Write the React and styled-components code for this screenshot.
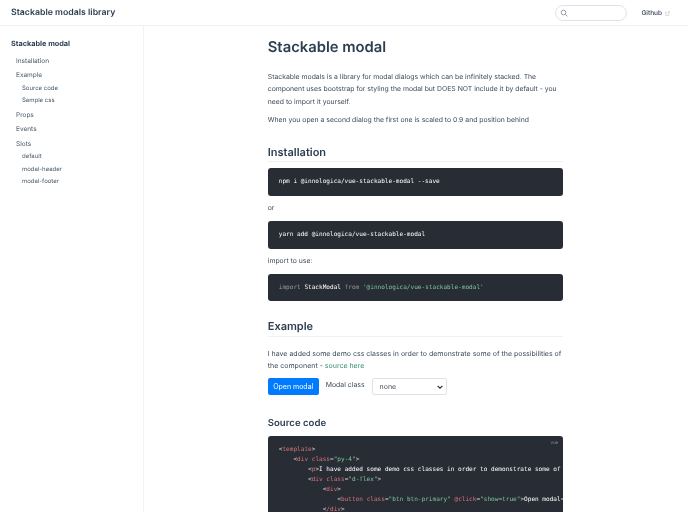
import React from "react";
import styled, { createGlobalStyle } from "styled-components";

const Global = createGlobalStyle`
  html, body { margin: 0; padding: 0; background: #fff; overflow: hidden; height: 512px; }
  body { font-family: Inter, "Noto Sans", sans-serif; color: #2c3e50; text-rendering: geometricPrecision; }
`;
const Page = styled.div`width: 688px; height: 512px; overflow: hidden; display: flex; flex-direction: column; background: #fff; filter: blur(0.4px);`;
const Header = styled.header`
  height: 25px; flex: none; border-bottom: 1px solid #eff1f3; display: flex; align-items: center;
  padding: 0 18px 0 11px;
`;
const Brand = styled.div`font-size: 8.75px; font-weight: 600; color: #2c3e50; flex: 1; padding-top: 1px;`;
const Search = styled.div`
  box-sizing: border-box; width: 72px; height: 16px; border: 1px solid #dfe3e7; border-radius: 8px; display: flex; align-items: center; padding-left: 4px;
  margin-right: 14px; color: #7d8791;
`;
const Github = styled.a`font-size: 6.5px; font-weight: 500; color: #2c3e50; display: flex; align-items: center; gap: 3px; padding-top: 1px;`;
const Body = styled.div`flex: 1; display: flex; min-height: 0;`;
const Sidebar = styled.aside`width: 144px; flex: none; border-right: 1px solid #f2f3f5; box-sizing: border-box; padding-top: 12px;`;
const SideTitle = styled.div`font-size: 7.3px; font-weight: 700; padding-left: 11px; line-height: 12px; margin-bottom: 3.8px;`;
const SideLink = styled.div`
  color: #4a5a6a;
  padding-left: ${p => (p.$sub ? 22 : 16)}px;
  font-size: ${p => (p.$sub ? 6 : 6.5)}px;
  line-height: ${p => (p.$sub ? 12.6 : 14.4)}px;
`;
const Main = styled.main`flex: 1; min-width: 0; display: flex; justify-content: center;`;
const Content = styled.div`width: 295.5px; padding-top: 11px; margin-left: -1px;`;
const H1 = styled.h1`font-size: 14.8px; line-height: 20px; font-weight: 600; margin: 0 0 14.2px;`;
const P = styled.p`
  font-size: ${p => (p.$large ? 7 : 6.85)}px; line-height: ${p => (p.$large ? 12 : 12.3)}px; margin: 0 0 6.4px; color: #3c4b5a;
`;
const H2 = styled.h2`
  font-size: 11px; line-height: 15px; font-weight: 600; margin: 18px 0 6px; padding-bottom: 1.5px; border-bottom: 1px solid #eff1f3;
  & + p { margin-top: 11px; }
`;
const H3 = styled.h3`font-size: 9.6px; line-height: 13px; font-weight: 600; margin: 21.5px 0 6px;`;
const Code = styled.pre`
  position: relative; margin: 0 0 6.5px; background: #282c34; border-radius: 3px; padding: 0 11px; height: 27.6px;
  line-height: 27.6px; font-family: "DejaVu Sans Mono", monospace; font-size: 6.08px; color: #fff; overflow: hidden;
`;
const Block = styled(Code)`height: 100px; line-height: 10px; padding-top: 9.6px; padding-right: 0; white-space: pre;`;
const Lang = styled.span`position: absolute; top: 3px; right: 5px; font-size: 4.5px; color: rgba(255,255,255,.4); font-family: Inter, sans-serif;`;
const K = styled.span`color: #999;`;
const S = styled.span`color: #7ec699;`;
const Tag = styled.span`color: #d8727a;`;
const Punct = styled.span`color: #ccc;`;
const A = styled.a`color: #2f8f68;`;
const Controls = styled.div`display: flex; align-items: center; gap: 7px;`;
const Btn = styled.button`
  width: 51px; height: 17px; background: #007bff; color: #fff; border: 0; border-radius: 2px; padding: 0;
  font: 7px Inter, sans-serif;
`;
const Label = styled.span`font-size: 6.9px; margin-top: -4px; color: #3c4b5a;`;
const Sel = styled.div`
  width: 75.5px; height: 17px; box-sizing: border-box; border: 1px solid #dfe3e7; border-radius: 2px; font-size: 7px; padding: 0 3px 0 7px;
  display: flex; align-items: center; justify-content: space-between; color: #495057;
`;

const Icon = () => (
  <svg width="8" height="8" viewBox="0 0 24 24" fill="none" stroke="currentColor" strokeWidth="2.4">
    <circle cx="10.5" cy="10.5" r="7" /><path d="M16 16l6 6" />
  </svg>
);
const Ext = () => (
  <svg width="5" height="5" viewBox="0 0 24 24" fill="none" stroke="#aaa" strokeWidth="2">
    <path d="M18 14v7H3V6h7M14 3h7v7M21 3L10 14" />
  </svg>
);
const T = ({ children }) => <><Punct>&lt;</Punct><Tag>{children}</Tag></>;
const E = () => <Punct>&gt;</Punct>;

export default function App() {
  return (
    <Page>
      <Global />
      <Header>
        <Brand>Stackable modals library</Brand>
        <Search><Icon /></Search>
        <Github>Github <Ext /></Github>
      </Header>
      <Body>
        <Sidebar>
          <SideTitle>Stackable modal</SideTitle>
          <SideLink>Installation</SideLink>
          <SideLink>Example</SideLink>
          <SideLink $sub>Source code</SideLink>
          <SideLink $sub>Sample css</SideLink>
          <SideLink>Props</SideLink>
          <SideLink>Events</SideLink>
          <SideLink>Slots</SideLink>
          <SideLink $sub>default</SideLink>
          <SideLink $sub>modal-header</SideLink>
          <SideLink $sub>modal-footer</SideLink>
        </Sidebar>
        <Main>
          <Content>
            <H1>Stackable modal</H1>
            <P>Stackable modals is a library for modal dialogs which can be infinitely stacked. The component uses bootstrap for styling the modal but DOES NOT include it by default - you need to import it yourself.</P>
            <P>When you open a second dialog the first one is scaled to 0.9 and position behind</P>
            <H2>Installation</H2>
            <Code>npm i @innologica/vue-stackable-modal --save</Code>
            <P>or</P>
            <Code>yarn add @innologica/vue-stackable-modal</Code>
            <P>import to use:</P>
            <Code><K>import</K> StackModal <K>from</K> <S>'@innologica/vue-stackable-modal'</S></Code>
            <H2>Example</H2>
            <P $large>I have added some demo css classes in order to demonstrate some of the possibilities of the component - <A>source here</A></P>
            <Controls>
              <Btn>Open modal</Btn>
              <Label>Modal class</Label>
              <Sel>none <svg width="6" height="4" viewBox="0 0 10 6" fill="none" stroke="#333" strokeWidth="2"><path d="M1 1l4 4 4-4" /></svg></Sel>
            </Controls>
            <H3>Source code</H3>
            <Block>
              <Lang>vue</Lang>
              <T>template</T><E />{"\n"}
              {"    "}<T>div</T> <Tag>class</Tag><Punct>=</Punct><S>"py-4"</S><E />{"\n"}
              {"        "}<T>p</T><E />I have added some demo css classes in order to demonstrate some of the possibilities{"\n"}
              {"        "}<T>div</T> <Tag>class</Tag><Punct>=</Punct><S>"d-flex"</S><E />{"\n"}
              {"            "}<T>div</T><E />{"\n"}
              {"                "}<T>button</T> <Tag>class</Tag><Punct>=</Punct><S>"btn btn-primary"</S> <Tag>@click</Tag><Punct>=</Punct><S>"show=true"</S><E />Open modal<T>/button</T><E />{"\n"}
              {"            "}<T>/div</T><E />
            </Block>
          </Content>
        </Main>
      </Body>
    </Page>
  );
}
